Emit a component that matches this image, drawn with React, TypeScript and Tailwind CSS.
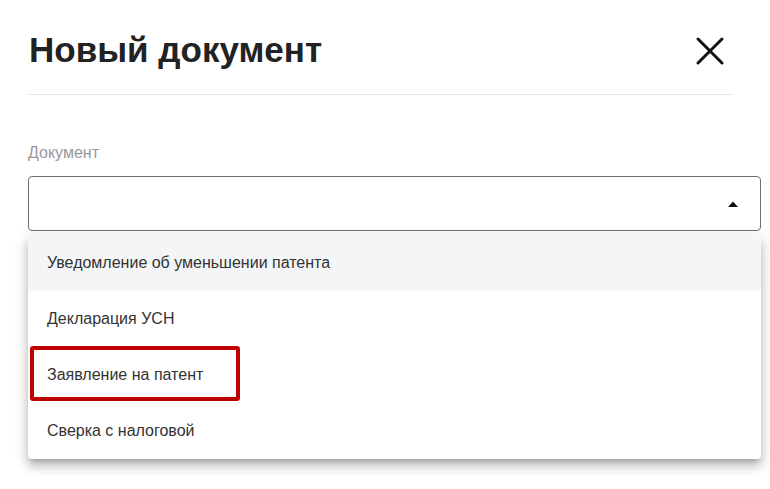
import React from "react";

const items = [
  "Уведомление об уменьшении патента",
  "Декларация УСН",
  "Заявление на патент",
  "Сверка с налоговой",
];

export default function App() {
  return (
    <div
      className="w-[770px] h-[489px] bg-white overflow-hidden"
      style={{ fontFamily: '"Liberation Sans", Arial, sans-serif' }}
    >
      <div className="pl-[28px] pr-[9px]">
        <div className="w-[705px] pt-[30px] pb-[25px] border-b border-[#e6e6e6] flex items-start justify-between">
          <h1 className="text-[35px] leading-[39px] font-bold text-[#222222] pl-[1px]">Новый документ</h1>
          <svg width="30" height="30" viewBox="0 0 30 30" className="mt-[6px] mr-[8px]">
            <path d="M3 3 L27 27 M27 3 L3 27" stroke="#111111" strokeWidth="3" strokeLinecap="round" fill="none" />
          </svg>
        </div>
        <div className="mt-[49px] text-[16px] leading-[18px] text-[#999999]">Документ</div>
        <div className="mt-[14px] h-[55px] w-[733px] border border-[#707070] rounded-[4px] flex items-center justify-end pr-[22px]">
          <svg width="10" height="6" viewBox="0 0 10 6">
            <path d="M0 6 L5 0.5 L10 6 Z" fill="#111111" />
          </svg>
        </div>
        <div className="mt-[4px] w-[733px] bg-white rounded-[4px] shadow-[0_5px_5px_-3px_rgba(0,0,0,0.2),0_8px_10px_1px_rgba(0,0,0,0.14),0_3px_14px_2px_rgba(0,0,0,0.12)]">
          {items.map((t, i) => (
            <div
              key={t}
              className={
                "relative h-[56px] flex items-center pl-[19px] text-[16px] text-[#333333] " +
                (i === 0 ? "bg-[#f4f5f7] rounded-t-[4px]" : "")
              }
            >
              {t}
              {i === 2 && (
                <div className="absolute left-[2px] top-[-1px] w-[210px] h-[55px] border-[4px] border-[#c00000] rounded-[3px]" />
              )}
            </div>
          ))}
        </div>
      </div>
    </div>
  );
}
